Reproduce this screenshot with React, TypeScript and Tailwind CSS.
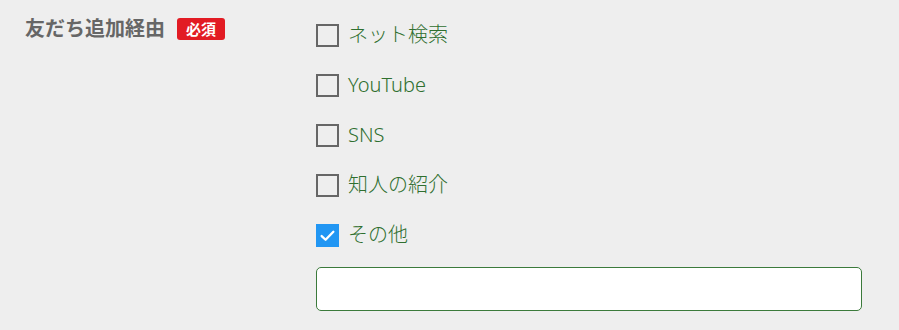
const options = ['ネット検索', 'YouTube', 'SNS', '知人の紹介', 'その他']

const Checkbox = ({ checked }: { checked: boolean }) =>
  checked ? (
    <span className="flex h-[23px] w-[23px] items-center justify-center bg-[#2196f3]">
      <svg width="17" height="17" viewBox="0 0 16 16" fill="none">
        <path d="M2.5 8.5 L6.2 12 L13.5 4.5" stroke="#fff" strokeWidth="2.2" strokeLinecap="round" strokeLinejoin="round" />
      </svg>
    </span>
  ) : (
    <span className="block h-[23px] w-[23px] border-2 border-[#666666] bg-[#eeeeee]" />
  )

const App = () => {
  return (
    <div
      className="flex h-[330px] w-[899px] bg-[#eeeeee]"
      style={{ fontFamily: '"Noto Sans", "Noto Sans CJK JP", sans-serif' }}
    >
      <div className="flex h-[48px] w-[316px] shrink-0 items-center gap-[12px] pl-[25px] pt-[10px]">
        <span className="text-[20px] font-bold leading-none text-[#666666]">友だち追加経由</span>
        <span className="flex h-[22px] w-[48px] items-center justify-center rounded-[3px] bg-[#e21b23] text-[15px] font-bold leading-none text-white">
          必須
        </span>
      </div>

      <div className="flex flex-col pt-[10px]">
        {options.map((label, i) => (
          <label key={label} className="flex h-[50px] items-center gap-[9px]">
            <Checkbox checked={i === options.length - 1} />
            <span className="text-[20px] font-light leading-none text-[#2f6f2f]">{label}</span>
          </label>
        ))}
        <input
          type="text"
          className="mt-[7px] h-[44px] w-[546px] rounded-[5px] border border-[#3b7a3b] bg-white px-3 outline-none"
        />
      </div>
    </div>
  )
}

export default App
